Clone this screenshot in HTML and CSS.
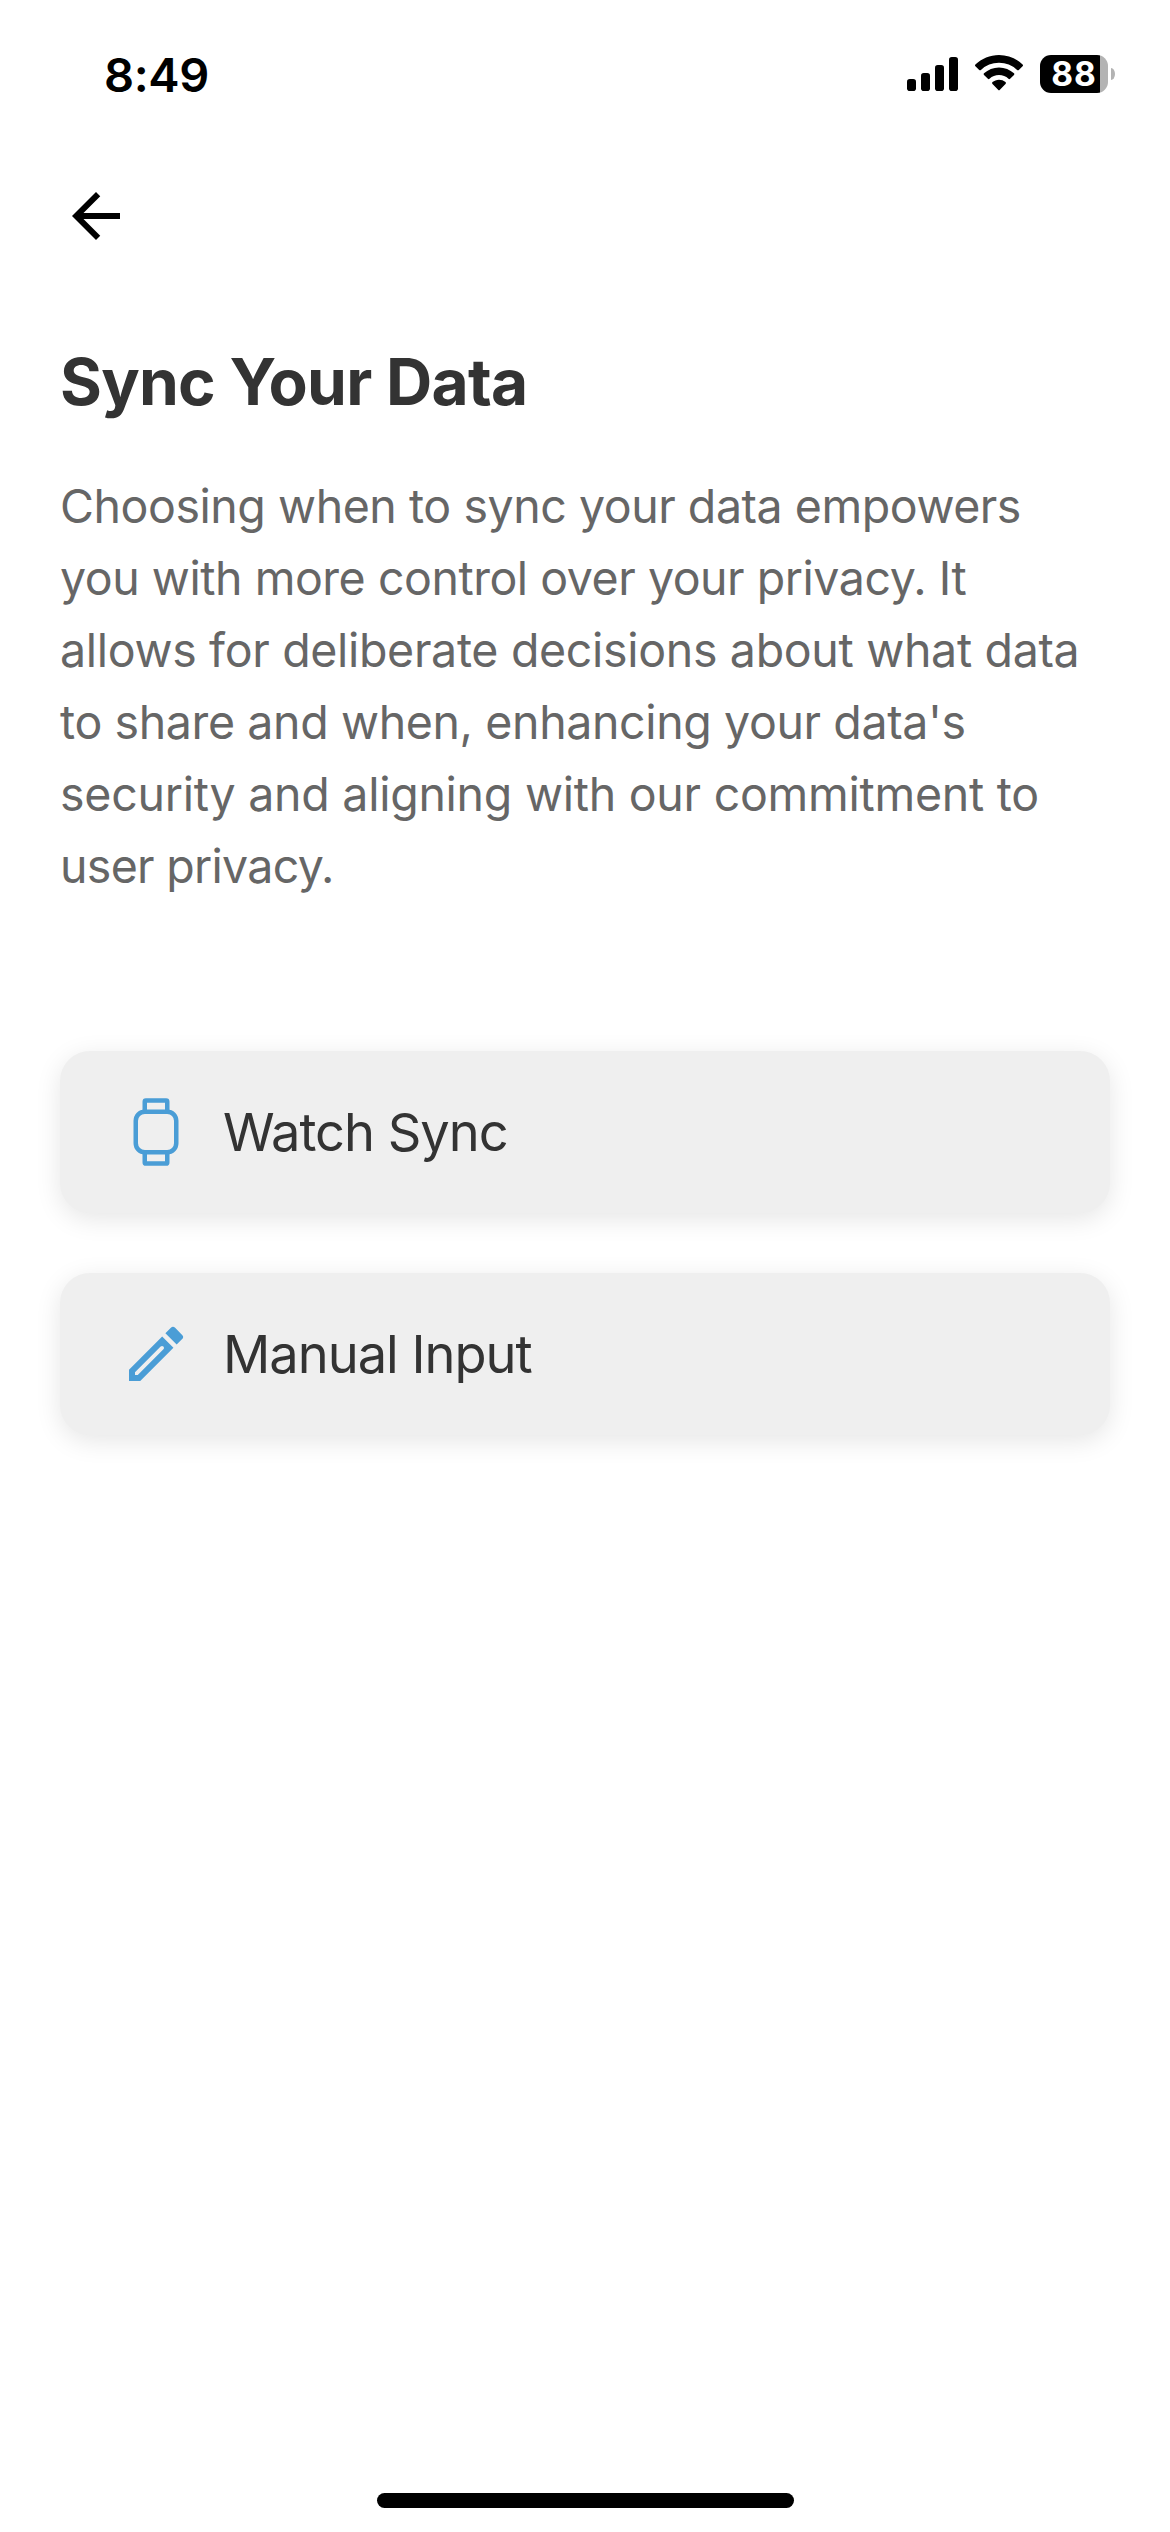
FILE: index.html
```html
<!DOCTYPE html>
<html lang="en">
<head>
<meta charset="utf-8">
<title>Sync Your Data</title>
<link rel="stylesheet" href="styles.css">
</head>
<body>
<div class="screen">
  <div class="status-bar">
    <span class="time">8:49</span>
    <div class="indicators">
      <svg class="signal" width="51" height="34" viewBox="0 0 51 34" aria-hidden="true">
        <rect x="0" y="22" width="9" height="12" rx="2.8"/>
        <rect x="14" y="16" width="9" height="18" rx="2.8"/>
        <rect x="28" y="8" width="9" height="26" rx="2.8"/>
        <rect x="42" y="0" width="9" height="34" rx="2.8"/>
      </svg>
      <svg class="wifi" width="50" height="38" viewBox="0 0 50 38" aria-hidden="true">
        <path d="M25 1C16 1 7.700 4.600 1.400 10.500a1.200 1.200 0 0 0 0 1.700l3.800 3.700a1.200 1.200 0 0 0 1.700 0A26.500 26.500 0 0 1 25 8.800a26.500 26.500 0 0 1 18.100 7.100 1.200 1.200 0 0 0 1.700 0l3.800-3.700a1.200 1.200 0 0 0 0-1.700C42.300 4.600 34 1 25 1z"/>
        <path d="M25 13.400c-5.700 0-11 2.200-15 5.900a1.200 1.200 0 0 0 0 1.700l3.900 3.800a1.200 1.200 0 0 0 1.600 0 14 14 0 0 1 19 0 1.200 1.200 0 0 0 1.600 0l3.900-3.800a1.200 1.200 0 0 0 0-1.700c-4-3.700-9.300-5.900-15-5.900z"/>
        <path d="M25 25.700c-2.500 0-4.700.9-6.500 2.400a1.200 1.200 0 0 0 0 1.800l5.600 5.900a1.200 1.200 0 0 0 1.800 0l5.600-5.900a1.200 1.200 0 0 0 0-1.800A10 10 0 0 0 25 25.700z"/>
      </svg>
      <div class="battery">
        <div class="battery-body"><span class="battery-level">88</span></div>
        <span class="battery-cap"></span>
      </div>
    </div>
  </div>

  <header class="nav">
    <svg width="72" height="72" viewBox="0 0 24 24" role="img" aria-label="Back">
      <path d="M20 11H7.830l5.590-5.590L12 4l-8 8 8 8 1.410-1.410L7.830 13H20z"/>
    </svg>
  </header>

  <main class="content">
    <h1 class="title">Sync Your Data</h1>
    <p class="description">
      <span class="line l1">Choosing when to sync your data empowers</span>
      <span class="line l2">you with more control over your privacy. It</span>
      <span class="line l3">allows for deliberate decisions about what data</span>
      <span class="line l4">to share and when, enhancing your data's</span>
      <span class="line l5">security and aligning with our commitment to</span>
      <span class="line l6">user privacy.</span>
    </p>
    <div class="options">
      <div class="option">
        <svg class="option-icon" viewBox="0 0 512 512" aria-hidden="true">
          <g fill="none" stroke="currentColor" stroke-width="32" stroke-linejoin="round">
            <rect x="112" y="112" width="288" height="288" rx="64"/>
            <path d="M176 112V40a8 8 0 0 1 8-8h144a8 8 0 0 1 8 8v72M336 400v72a8 8 0 0 1-8 8H184a8 8 0 0 1-8-8v-72"/>
          </g>
        </svg>
        <span>Watch Sync</span>
      </div>
      <div class="option">
        <svg class="option-icon" viewBox="0 0 24 24" aria-hidden="true">
          <path fill="currentColor" fill-rule="evenodd" d="M3 17.250V21h3.750L17.810 9.940l-3.750-3.750L3 17.250zM5.920 19H5v-.92l8.550-8.550a.65.65 0 0 1 .92.920L5.920 19zM20.710 7.040a1 1 0 0 0 0-1.410l-2.340-2.340a1 1 0 0 0-1.410 0l-1.830 1.830 3.750 3.750 1.830-1.830z"/>
        </svg>
        <span>Manual Input</span>
      </div>
    </div>
  </main>

  <div class="home-indicator"></div>
</div>
</body>
</html>
```
FILE: styles.css
```css
* { box-sizing: border-box; }

body {
  margin: 0;
  background: #fff;
  font-family: Inter, "Liberation Sans", sans-serif;
}

.screen {
  display: flex;
  flex-direction: column;
  width: 1170px;
  height: 2532px;
  padding-bottom: 24px;
}

.status-bar {
  display: flex;
  align-items: center;
  justify-content: space-between;
  height: 148px;
  padding: 0 55px 0 104px;
  color: #000;
}

.time {
  font-size: 47px;
  font-weight: 600;
  letter-spacing: -0.4px;
}

.indicators {
  display: flex;
  align-items: center;
}

.wifi { margin: -2px 16px 0; }

.battery {
  display: flex;
  align-items: center;
  gap: 3px;
}

.battery-body {
  display: flex;
  align-items: center;
  justify-content: center;
  width: 68px;
  height: 38px;
  border-radius: 11px;
  background: linear-gradient(to right, #000 60px, #b3b3b3 60px);
}

.battery-level {
  color: #fff;
  font-size: 33.5px;
  font-weight: 700;
  line-height: 38px;
  letter-spacing: 1px;
}

.battery-cap {
  width: 4px;
  height: 12px;
  border-radius: 0 4px 4px 0 / 0 6px 6px 0;
  background: #b3b3b3;
}

.nav {
  display: flex;
  padding: 32px 60px 0;
}

.content {
  flex: 1;
  padding: 90px 60px 0;
}

.title {
  margin: 0 0 48px;
  color: #333;
  font-size: 64px;
  font-weight: 700;
  line-height: 80px;
  letter-spacing: -0.72px;
}

.description {
  margin: 0 0 149px;
  color: #666;
  font-size: 46.5px;
  line-height: 72px;
}

.line {
  display: block;
  white-space: nowrap;
}

.l1 { letter-spacing: -0.45px; }
.l2 { letter-spacing: -0.46px; }
.l3 { letter-spacing: -0.32px; }
.l4 { letter-spacing: -0.38px; }
.l5 { letter-spacing: -0.26px; }
.l6 { letter-spacing: -0.7px; }

.options {
  display: flex;
  flex-direction: column;
  gap: 60px;
}

.option {
  display: flex;
  align-items: center;
  gap: 31px;
  height: 162px;
  padding: 0 60px;
  border-radius: 30px;
  background: #efefef;
  box-shadow: 0 6px 26px rgba(0, 0, 0, 0.1);
  color: #333;
  font-size: 52.4px;
  line-height: 78px;
  letter-spacing: -1px;
}

.option-icon {
  width: 72px;
  height: 72px;
  color: #4a9dd6;
}

.home-indicator {
  align-self: center;
  width: 417px;
  height: 15px;
  border-radius: 8px;
  background: #000;
}
```
